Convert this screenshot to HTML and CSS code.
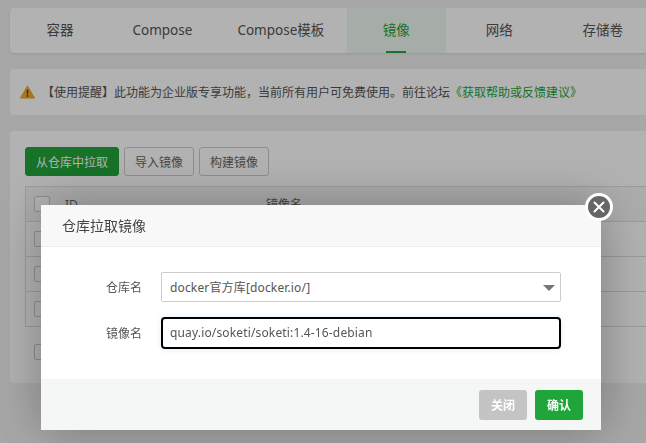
FILE: index.html
```html
<!DOCTYPE html>
<html lang="zh-CN">
<head>
<meta charset="utf-8">
<title>仓库拉取镜像</title>
<link rel="stylesheet" href="styles.css">
</head>
<body>
<div class="page">
  <nav class="tabs">
    <a class="tab">容器</a>
    <a class="tab">Compose</a>
    <a class="tab">Compose模板</a>
    <a class="tab active">镜像</a>
    <a class="tab tab-wide">网络</a>
    <a class="tab">存储卷</a>
  </nav>
  <div class="notice">
    <svg class="warn" viewBox="0 0 16 14" width="15" height="14"><path d="M8 .5 15.6 13.5H.4Z" fill="#f0a92e" stroke="#f0a92e" stroke-linejoin="round"/><path d="M7.1 4.6h1.8l-.3 5H7.4ZM7.1 10.4h1.8v1.7H7.1Z" fill="#5a4012"/></svg>
    <p class="notice-text">【使用提醒】此功能为企业版专享功能，当前所有用户可免费使用。前往论坛<a class="link">《获取帮助或反馈建议》</a></p>
  </div>
  <section class="panel">
    <div class="toolbar">
      <button class="btn primary">从仓库中拉取</button>
      <button class="btn">导入镜像</button>
      <button class="btn">构建镜像</button>
    </div>
    <div class="table">
      <div class="row head"><span class="check"></span><span class="col-id">ID</span><span class="col-name">镜像名</span></div>
      <div class="row"><span class="check"></span></div>
      <div class="row"><span class="check"></span></div>
      <div class="row"><span class="check"></span></div>
    </div>
    <div class="table-foot"><span class="check foot-check"></span></div>
  </section>
</div>
<div class="overlay"></div>
<div class="modal">
  <button class="modal-close" aria-label="关闭">
    <svg viewBox="0 0 12 12" width="12" height="12"><path d="M1.5 1.5l9 9M10.5 1.5l-9 9" stroke="#fff" stroke-width="2" stroke-linecap="round"/></svg>
  </button>
  <header class="modal-head">仓库拉取镜像</header>
  <div class="modal-body">
    <div class="field">
      <label class="field-label">仓库名</label>
      <div class="select">docker官方库[docker.io/]<span class="caret"></span></div>
    </div>
    <div class="field">
      <label class="field-label">镜像名</label>
      <div class="input">quay.io/soketi/soketi:1.4-16-debian</div>
    </div>
  </div>
  <footer class="modal-foot">
    <button class="foot-btn muted">关闭</button>
    <button class="foot-btn ok">确认</button>
  </footer>
</div>
</body>
</html>
```
FILE: styles.css
```css
* { box-sizing: border-box; }
html, body { margin: 0; height: 100%; overflow: hidden; }
body {
  background: #f0f0f0;
  color: #666;
  font-family: "Noto Sans", "Noto Sans CJK SC", sans-serif;
  font-size: 12px;
}
.page {
  width: 660px;
  padding: 8px 0 0 10px;
}
.tabs {
  display: flex;
  height: 45px;
  background: #fff;
  border-radius: 4px 0 0 4px;
  box-shadow: 0 1px 3px rgba(0,0,0,.1);
}
.tab {
  min-width: 100px;
  padding: 0 22.5px;
  text-align: center;
  line-height: 45px;
  font-size: 13.5px;
  color: #555;
  position: relative;
}
.tab-wide { min-width: 107px; }
.active {
  min-width: 99px;
  background: #eef6f0;
  color: #20a53a;
}
.active::after {
  content: "";
  position: absolute;
  left: 39px;
  bottom: 0;
  width: 20px;
  height: 2px;
  background: #20a53a;
}
.notice {
  display: flex;
  align-items: center;
  height: 46px;
  margin-top: 16px;
  padding-left: 10px;
  background: #fff;
  border-radius: 4px 0 0 4px;
}
.warn { flex: none; margin-top: -1px; }
.notice-text {
  margin: 0 0 0 7px;
  font-size: 12px;
  color: #555;
  white-space: nowrap;
}
.link { color: #20a53a; }
.panel {
  height: 252px;
  margin-top: 16px;
  padding: 16px 0 0 15px;
  background: #fff;
  border-radius: 4px 0 0 4px;
}
.toolbar {
  display: flex;
  gap: 5px;
  height: 30px;
}
.btn {
  height: 29px;
  padding: 0 10px;
  border: 1px solid #ccc;
  border-radius: 3px;
  background: #fff;
  color: #666;
  font: inherit;
}
.primary {
  padding: 0 10px;
  background: #20a53a;
  border-color: #20a53a;
  color: #fff;
}
.table {
  margin-top: 9px;
  border: 1px solid #ddd;
  border-right: 0;
  border-bottom: 0;
}
.row {
  display: flex;
  align-items: center;
  height: 35px;
  padding-left: 8px;
  border-bottom: 1px solid #ddd;
}
.head { background: #f6f6f6; }
.check {
  flex: none;
  width: 16px;
  height: 16px;
  border: 1px solid #ccc;
  border-radius: 2px;
  background: #fff;
}
.foot-check { display: block; }
.col-id { margin-left: 15px; width: 201px; }
.table-foot { padding: 17px 0 0 9px; }
.overlay {
  position: fixed;
  inset: 0;
  background: rgba(0,0,0,.3);
}
.modal {
  position: fixed;
  left: 41px;
  top: 205px;
  width: 560px;
  height: 225px;
  display: flex;
  flex-direction: column;
  background: #fff;
  box-shadow: 1px 1px 50px rgba(0,0,0,.3);
}
.modal-close {
  position: absolute;
  right: -12px;
  top: -12px;
  display: flex;
  align-items: center;
  justify-content: center;
  width: 28px;
  height: 28px;
  padding: 0;
  border: 3px solid #fff;
  border-radius: 50%;
  background: #666;
}
.modal-head {
  height: 42px;
  padding-left: 21px;
  line-height: 41px;
  font-size: 14px;
  color: #444;
  background: #f8f8f8;
  border-bottom: 1px solid #eee;
}
.modal-body {
  flex: 1;
  display: flex;
  flex-direction: column;
  gap: 15px;
  padding-top: 25px;
}
.field { display: flex; align-items: center; }
.field-label {
  width: 101px;
  text-align: right;
  color: #555;
}
.select, .input {
  width: 400px;
  margin-left: 19px;
  padding-left: 8px;
  font-size: 12px;
  letter-spacing: .15px;
  color: #555;
  background: #fff;
}
.select {
  position: relative;
  height: 30px;
  line-height: 30px;
  border: 1px solid #ccc;
  border-radius: 2px;
}
.caret {
  position: absolute;
  right: 5px;
  top: 12px;
  border: 6px solid transparent;
  border-top-color: #777;
  border-bottom: 0;
}
.input {
  height: 32px;
  line-height: 28px;
  border: 2px solid #000;
  border-radius: 4px;
  box-shadow: 0 0 6px rgba(32,140,220,.15);
  padding-left: 7px;
}
.modal-foot {
  display: flex;
  justify-content: flex-end;
  gap: 8px;
  height: 51px;
  padding: 11px 18px 0 0;
  background: #f5f6f6;
}
.foot-btn {
  width: 48px;
  height: 30px;
  padding: 0;
  border: 0;
  border-radius: 3px;
  color: #fff;
  font: 600 12px "Noto Sans", "Noto Sans CJK SC", sans-serif;
}
.muted { background: #c4c4c4; }
.ok { background: #20a53a; }
```
